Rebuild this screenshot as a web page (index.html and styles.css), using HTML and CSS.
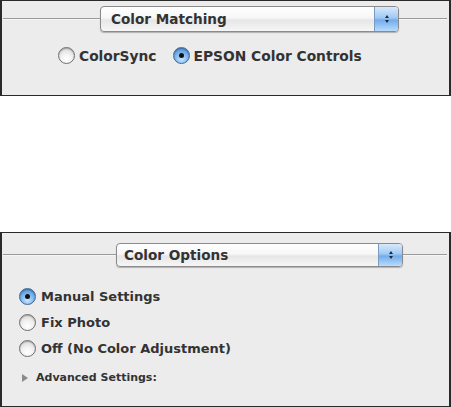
FILE: index.html
```html
<!DOCTYPE html>
<html>
<head>
<meta charset="utf-8">
<link rel="stylesheet" href="styles.css">
</head>
<body>
<div class="panel panel-one">
  <div class="header">
    <div class="rule rule-left-one"></div>
    <div class="popup popup-one">
      <span class="popup-label">Color Matching</span>
      <span class="stepper"><span class="arr up"></span><span class="arr down"></span></span>
    </div>
    <div class="rule"></div>
  </div>
  <div class="radio-row">
    <label class="radio"><span class="dot"></span><span class="rtext">ColorSync</span></label>
    <label class="radio"><span class="dot on"></span><span class="rtext">EPSON Color Controls</span></label>
  </div>
</div>

<div class="panel panel-two">
  <div class="header">
    <div class="rule rule-left-two"></div>
    <div class="popup popup-two">
      <span class="popup-label">Color Options</span>
      <span class="stepper"><span class="arr up"></span><span class="arr down"></span></span>
    </div>
    <div class="rule"></div>
  </div>
  <div class="radio-list">
    <label class="radio"><span class="dot on"></span><span class="rtext">Manual Settings</span></label>
    <label class="radio"><span class="dot"></span><span class="rtext">Fix Photo</span></label>
    <label class="radio"><span class="dot"></span><span class="rtext">Off (No Color Adjustment)</span></label>
  </div>
  <div class="disclosure"><span class="tri"></span><span class="dtext">Advanced Settings:</span></div>
</div>
</body>
</html>
```

FILE: styles.css
```css
html, body {
  margin: 0;
  padding: 0;
  background: #ffffff;
}
body {
  width: 451px;
  height: 407px;
  font-family: "DejaVu Sans", Verdana, sans-serif;
  color: #2e2e2e;
}
.panel {
  box-sizing: border-box;
  width: 451px;
  background: #ececec;
  border: 1px solid #2a2a2a;
  border-left-width: 2px;
  border-right-width: 2px;
}
.panel-one {
  height: 96px;
  padding-top: 5px;
}
.panel-two {
  margin-top: 136px;
  height: 175px;
  padding-top: 10px;
}
.header {
  display: flex;
  align-items: center;
  padding: 0 2px 0 1px;
}
.rule {
  flex: 1;
  height: 1px;
  background: #9a9a9a;
  border-bottom: 1px solid #f6f6f6;
}
.rule-left-one { flex: 0 0 97px; }
.rule-left-two { flex: 0 0 113px; }
.popup {
  box-sizing: border-box;
  display: flex;
  align-items: stretch;
  height: 26px;
  border: 1px solid #8a8a8a;
  border-radius: 4px;
  background: linear-gradient(#ffffff 0%, #f7f7f7 45%, #e6e6e6 55%, #f6f6f6 100%);
  box-shadow: 0 1px 1px rgba(0,0,0,0.25);
}
.popup-one { width: 299px; }
.popup-two { width: 287px; height: 24px; }
.popup-label {
  flex: 1;
  display: flex;
  align-items: center;
  padding-left: 10px;
  font-weight: bold;
  font-size: 13.6px;
  color: #333333;
}
.popup-two .popup-label { padding-left: 7px; }
.stepper {
  width: 23px;
  display: flex;
  flex-direction: column;
  align-items: center;
  justify-content: center;
  gap: 2px;
  border-left: 1px solid #7b9cc0;
  border-radius: 0 3px 3px 0;
  background: linear-gradient(#d8e9fa 0%, #9fcaf4 45%, #72aceb 55%, #b9dcfc 100%);
}
.arr {
  width: 0;
  height: 0;
  border-left: 2.5px solid transparent;
  border-right: 2.5px solid transparent;
}
.arr.up { border-bottom: 3px solid #1e2a3a; }
.arr.down { border-top: 3px solid #1e2a3a; }
.radio-row {
  display: flex;
  justify-content: flex-start;
  gap: 16px;
  padding-left: 56px;
  margin-top: 15px;
}
.radio {
  display: flex;
  align-items: center;
  gap: 4px;
}
.dot {
  box-sizing: border-box;
  flex: 0 0 17px;
  width: 17px;
  height: 17px;
  border-radius: 50%;
  border: 1px solid #6f6f6f;
  background: radial-gradient(circle at 50% 75%, #ffffff 0%, #f2f2f2 40%, #cfcfcf 100%);
  box-shadow: inset 0 1px 1px rgba(0,0,0,0.25);
  display: flex;
  align-items: center;
  justify-content: center;
}
.dot.on {
  border-color: #3e6894;
  background: radial-gradient(circle at 50% 75%, #c8e6ff 0%, #7fb8ee 45%, #3f7fcc 100%);
}
.dot.on::after {
  content: "";
  width: 5px;
  height: 5px;
  border-radius: 50%;
  background: #111;
}
.rtext {
  font-weight: bold;
  font-size: 13.8px;
  color: #333333;
}
.radio-list {
  display: flex;
  flex-direction: column;
  gap: 9px;
  padding-left: 17px;
  margin-top: 21px;
}
.radio-list .radio { gap: 5px; }
.radio-list .rtext { font-size: 13px; }
.disclosure {
  display: flex;
  align-items: center;
  gap: 8px;
  padding-left: 20px;
  margin-top: 14px;
}
.tri {
  width: 0;
  height: 0;
  border-top: 4px solid transparent;
  border-bottom: 4px solid transparent;
  border-left: 6px solid #8a8a8a;
}
.dtext {
  font-size: 11px;
  font-weight: bold;
  color: #333333;
}
```
